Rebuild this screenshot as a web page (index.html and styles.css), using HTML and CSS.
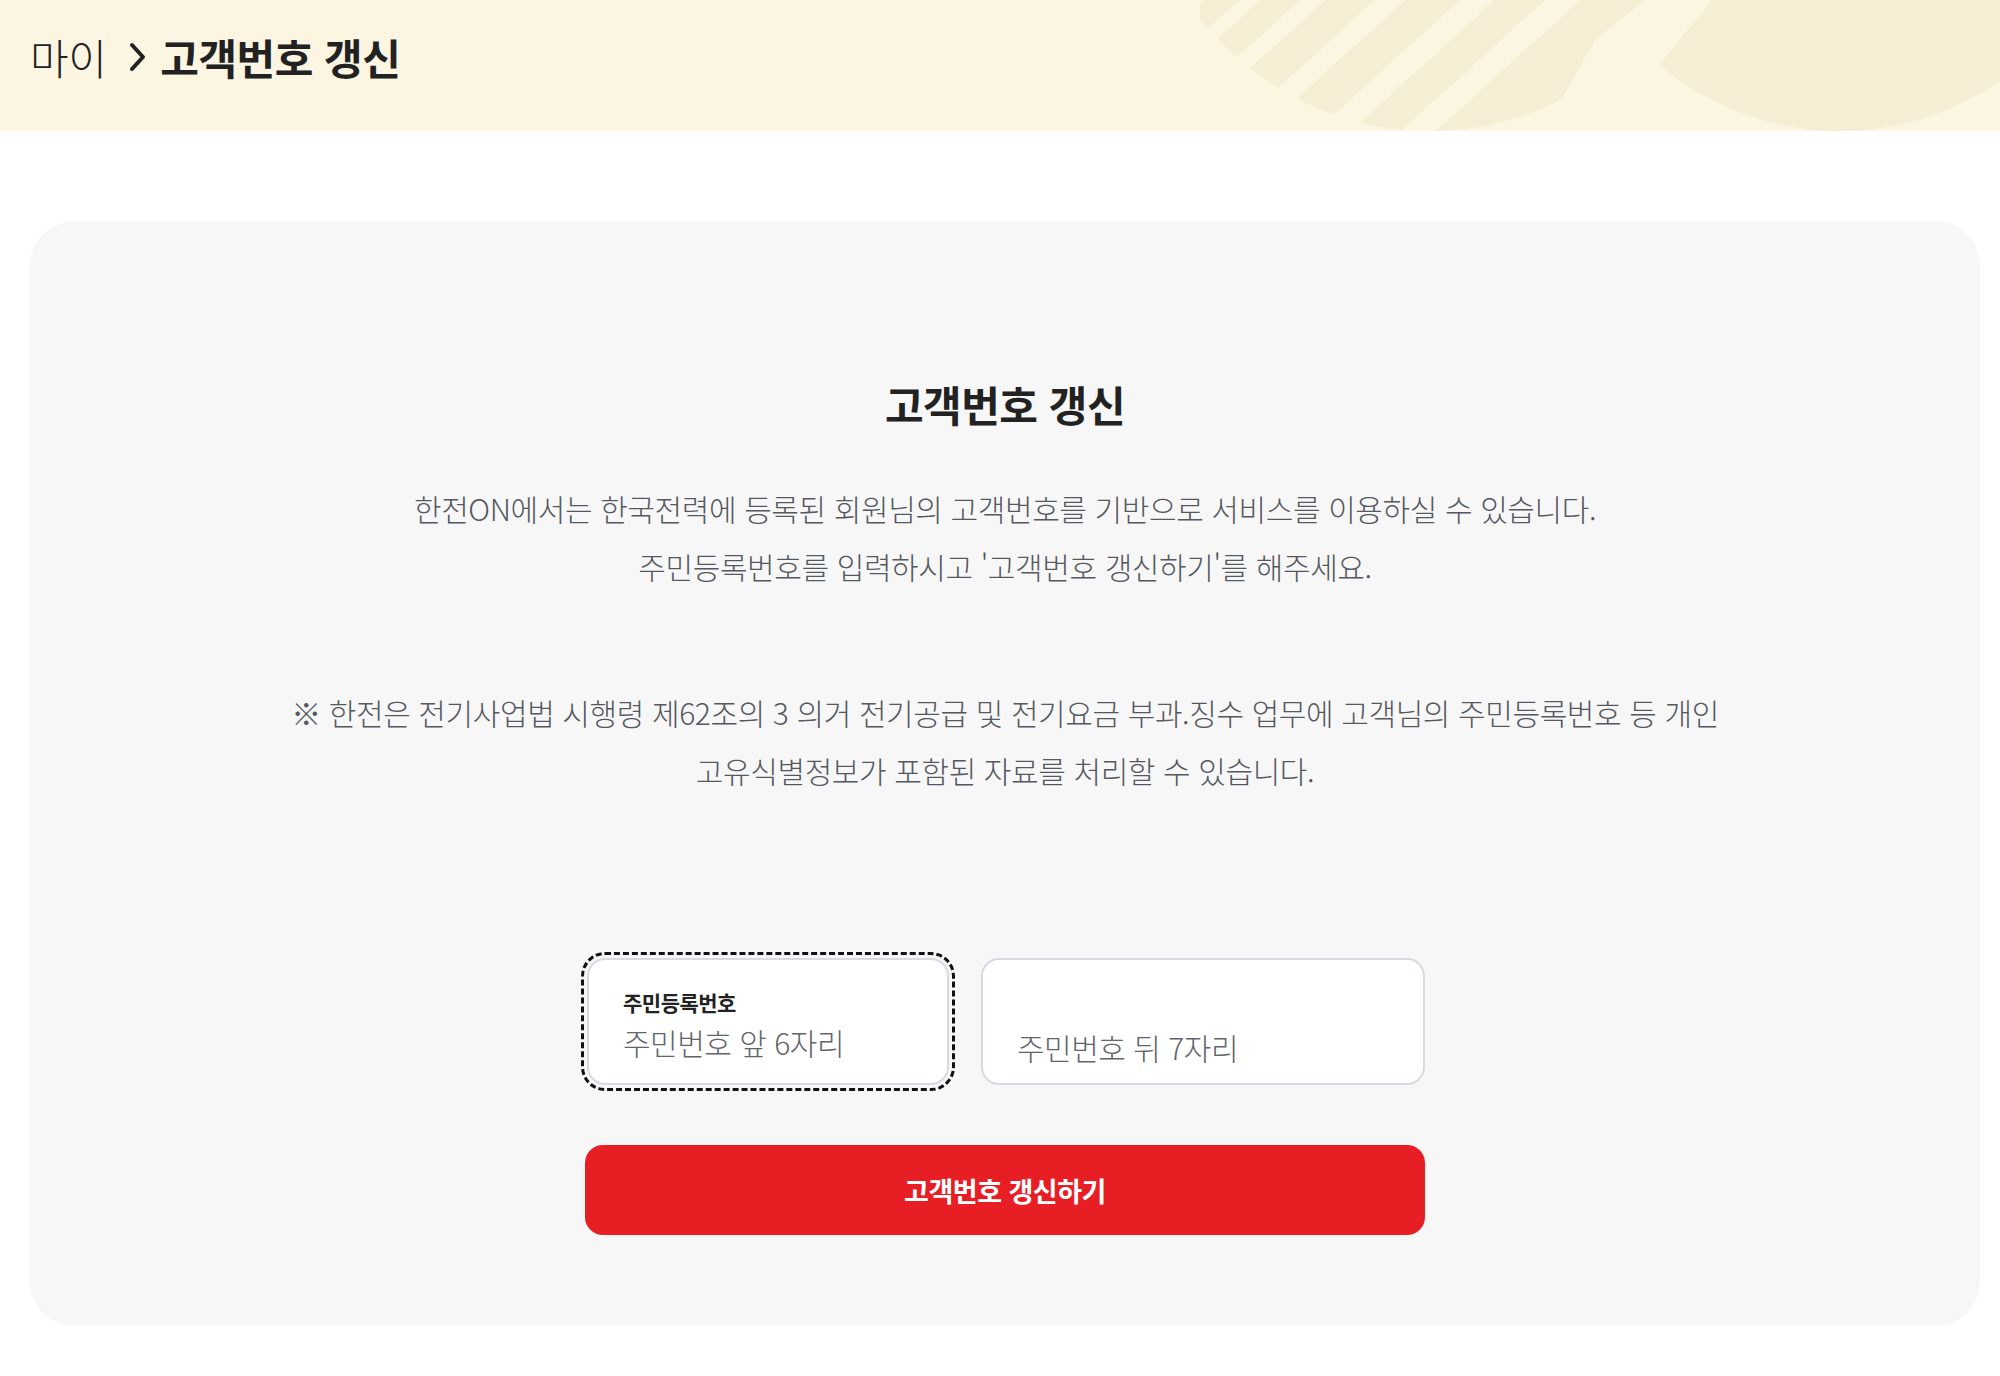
FILE: index.html
```html
<!DOCTYPE html>
<html lang="ko">
<head>
    <meta charset="UTF-8">
    <meta name="viewport" content="width=device-width, initial-scale=1.0">
    <title>고객번호 갱신</title>
    <link rel="stylesheet" href="styles.css">
</head>
<body>
    <header class="page-header">
        <div class="breadcrumb">
            <span class="crumb">마이</span>
            <svg class="crumb-arrow" viewBox="0 0 20 30" width="20" height="30">
                <path d="M4 3 L15 15 L4 27" fill="none" stroke="#222" stroke-width="4" stroke-linecap="round" stroke-linejoin="round"/>
            </svg>
            <span class="crumb current">고객번호 갱신</span>
        </div>
        <!-- decorative pattern on the right side of the header -->
        <svg class="header-deco" viewBox="1200 0 800 131" width="800" height="131" aria-hidden="true">
            <defs>
                <clipPath id="ringLeft"><circle cx="1430" cy="-159" r="290"/></clipPath>
                <clipPath id="ringRight"><circle cx="1840" cy="-150" r="281"/></clipPath>
            </defs>
            <g fill="#f5eed4" clip-path="url(#ringLeft)">
                <polygon points="1205,0 1240,0 1020,200 985,200"/>
                <polygon points="1260,0 1300,0 1080,200 1040,200"/>
                <polygon points="1325,0 1375,0 1155,200 1105,200"/>
                <polygon points="1405,0 1460,0 1240,200 1185,200"/>
                <polygon points="1495,0 1545,0 1325,200 1275,200"/>
                <polygon points="1580,0 1645,0 1595,40 1505,200 1360,200"/>
            </g>
            <path fill="#f5eed4" clip-path="url(#ringRight)" d="M1712 0 H2000 V131 H1605 Z"/>
        </svg>
    </header>

    <main class="content">
        <section class="card">
            <h1 class="card-title">고객번호 갱신</h1>
            <p class="desc">
                한전ON에서는 한국전력에 등록된 회원님의 고객번호를 기반으로 서비스를 이용하실 수 있습니다.<br>
                주민등록번호를 입력하시고 '고객번호 갱신하기'를 해주세요.
            </p>
            <p class="desc notice">
                ※ 한전은 전기사업법 시행령 제62조의 3 의거 전기공급 및 전기요금 부과.징수 업무에 고객님의 주민등록번호 등 개인<br>
                고유식별정보가 포함된 자료를 처리할 수 있습니다.
            </p>

            <form class="id-form" onsubmit="return false;">
                <div class="fields">
                    <div class="field focused">
                        <label for="rrnFront">주민등록번호</label>
                        <input type="text" id="rrnFront" placeholder="주민번호 앞 6자리">
                    </div>
                    <div class="field wide">
                        <input type="password" id="rrnBack" placeholder="주민번호 뒤 7자리" aria-label="주민번호 뒤 7자리">
                    </div>
                </div>
                <button type="submit" class="submit-button">고객번호 갱신하기</button>
            </form>
        </section>
    </main>
</body>
</html>
```

FILE: styles.css
```css
body {
    margin: 0;
    padding: 0;
    font-family: "Noto Sans CJK KR", "Noto Sans", sans-serif;
    color: #222;
    background-color: #fff;
}

.page-header {
    position: relative;
    height: 131px;
    background-color: #fbf5e2;
    overflow: hidden;
    display: flex;
    align-items: center;
    padding: 0 0 18px 30px;
    box-sizing: border-box;
}

.breadcrumb {
    display: flex;
    align-items: center;
    font-size: 42px;
    letter-spacing: -0.5px;
    position: relative;
    z-index: 1;
}

.crumb {
    font-weight: 300;
    color: #222;
}

.crumb.current {
    font-weight: 700;
}

.crumb-arrow {
    margin: 0 12px 0 22px;
}

.header-deco {
    position: absolute;
    top: 0;
    right: 0;
}

.content {
    padding: 90px 20px 50px 30px;
}

.card {
    background-color: #f7f7f7;
    border-radius: 45px;
    height: 1105px;
    box-sizing: border-box;
    padding-top: 155px;
    text-align: center;
}

.card-title {
    margin: 0;
    font-size: 42px;
    line-height: 56px;
    font-weight: 700;
    color: #222;
    letter-spacing: -0.5px;
}

.desc {
    margin: 47px 0 0;
    font-size: 30px;
    line-height: 58px;
    font-weight: 300;
    color: #55585f;
    letter-spacing: -0.4px;
}

.desc.notice {
    margin-top: 88px;
}

.id-form {
    width: 840px;
    margin: 159px auto 0;
}

.fields {
    display: flex;
    gap: 32px;
    padding-left: 2px;
}

.field {
    height: 127px;
    box-sizing: border-box;
    background-color: #fff;
    border: 2px solid #d6dae3;
    border-radius: 18px;
    padding: 0 34px 20px;
    display: flex;
    flex-direction: column;
    justify-content: flex-end;
    text-align: left;
    width: 362px;
}

.field.wide {
    flex: 1;
    padding-bottom: 15px;
}

.field.focused {
    outline: 3px dashed #111;
    outline-offset: 3px;
}

.field label {
    font-size: 21px;
    line-height: 28px;
    font-weight: 700;
    color: #222;
    letter-spacing: -0.5px;
    margin-bottom: 5px;
}

.field input {
    border: none;
    outline: none;
    background: transparent;
    padding: 0;
    font-family: inherit;
    font-size: 30px;
    line-height: 42px;
    height: 42px;
    font-weight: 300;
    letter-spacing: -0.5px;
    color: #222;
}

.field input::placeholder {
    color: #62656c;
}

.submit-button {
    display: block;
    width: 840px;
    height: 90px;
    margin-top: 60px;
    border: none;
    border-radius: 18px;
    background-color: #e81e25;
    color: #fff;
    font-family: inherit;
    font-size: 27px;
    font-weight: 700;
    letter-spacing: -0.5px;
    cursor: pointer;
}
```
